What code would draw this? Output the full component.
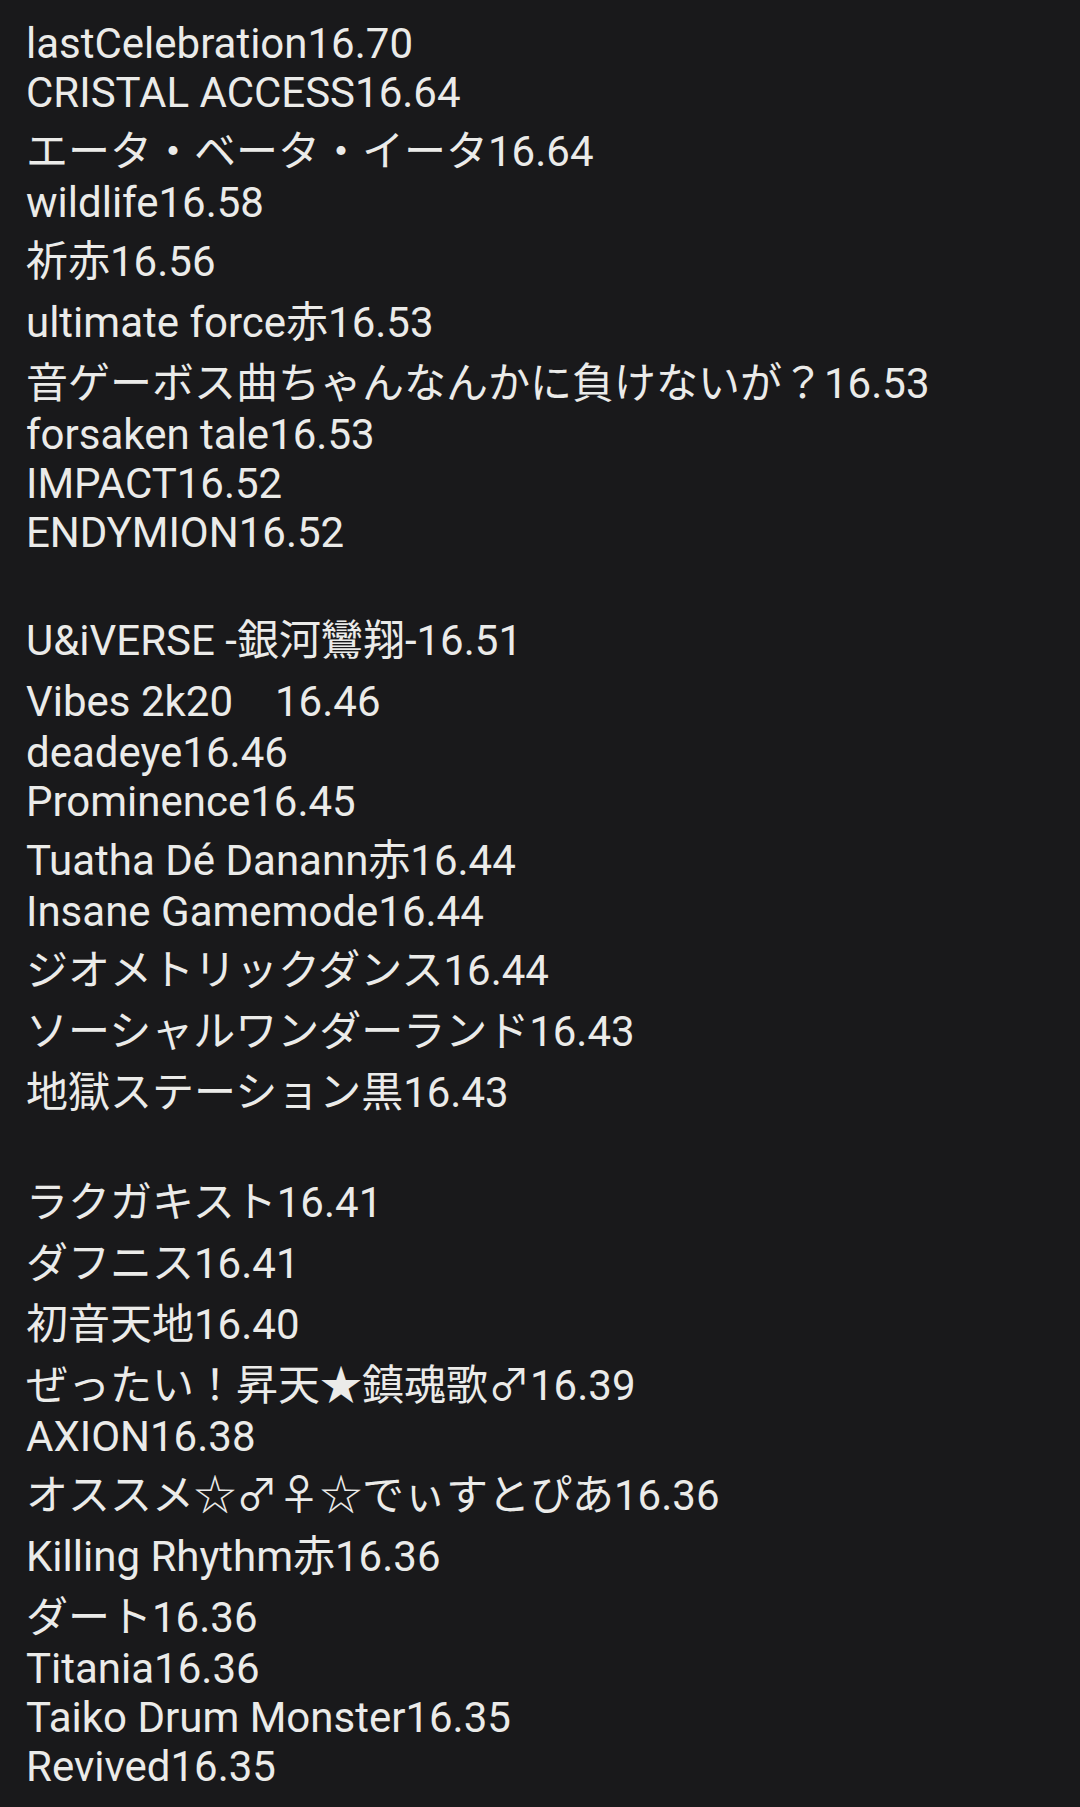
const lines = [
  "lastCelebration16.70",
  "CRISTAL ACCESS16.64",
  "エータ・ベータ・イータ16.64",
  "wildlife16.58",
  "祈赤16.56",
  "ultimate force赤16.53",
  "音ゲーボス曲ちゃんなんかに負けないが？16.53",
  "forsaken tale16.53",
  "IMPACT16.52",
  "ENDYMION16.52",
  "",
  "U&iVERSE -銀河鸞翔-16.51",
  "Vibes 2k20\u300016.46",
  "deadeye16.46",
  "Prominence16.45",
  "Tuatha Dé Danann赤16.44",
  "Insane Gamemode16.44",
  "ジオメトリックダンス16.44",
  "ソーシャルワンダーランド16.43",
  "地獄ステーション黒16.43",
  "",
  "ラクガキスト16.41",
  "ダフニス16.41",
  "初音天地16.40",
  "ぜったい！昇天★鎮魂歌♂16.39",
  "AXION16.38",
  "オススメ☆♂♀☆でぃすとぴあ16.36",
  "Killing Rhythm赤16.36",
  "ダート16.36",
  "Titania16.36",
  "Taiko Drum Monster16.35",
  "Revived16.35",
]

// lines with CJK / symbol glyphs sit taller (fallback font ascent)
const isWide = (s: string) => /[^\u0000-\u024f]/.test(s)

export default function App() {
  return (
    <div className="min-h-[1807px] w-full bg-[#19191b] pl-[26px] pt-[19px] font-['Roboto','Noto_Sans_CJK_JP',sans-serif] text-[42px] leading-[49px] text-[#ebebe9]">
      {lines.map((line, i) => (
        <div key={i} className={isWide(line) ? "whitespace-pre pt-[10px] pb-[2px]" : "whitespace-pre"}>
          {line === "" ? "\u00a0" : line}
        </div>
      ))}
    </div>
  )
}
